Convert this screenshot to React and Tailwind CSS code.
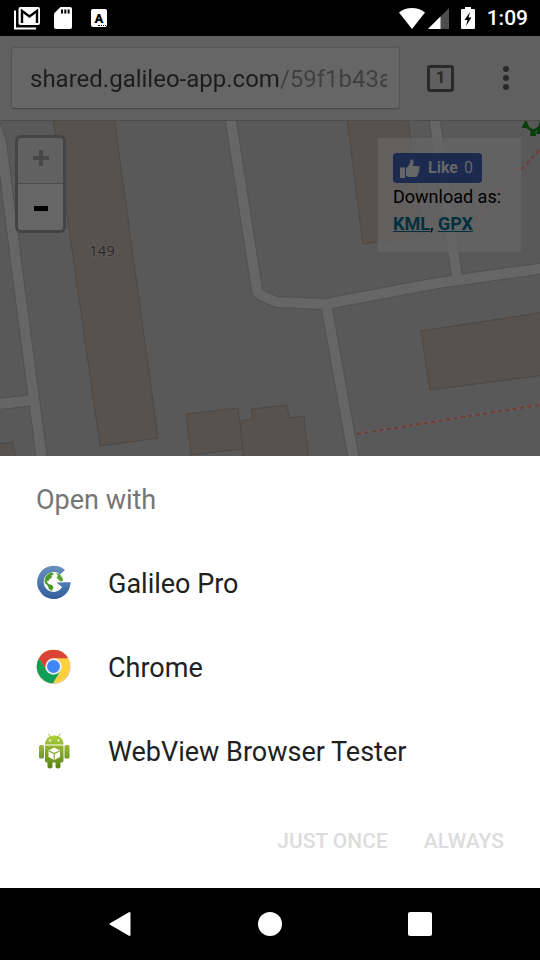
import React from "react";

function GmailIcon() {
  return (
    <svg viewBox="0 0 27 24" className="h-6 w-[27px]" fill="none">
      <path d="M1 4.500V22.500H22" stroke="#fff" strokeWidth="2" />
      <rect x="4.500" y="1" width="21.500" height="18" rx="2" fill="#fff" />
      <path d="M8 17V4.800L15.500 10.500L23 4.800V17" stroke="#000" strokeWidth="2.400" />
    </svg>
  );
}

function SdCardIcon() {
  return (
    <svg viewBox="0 0 18 22" className="h-[22px] w-[18px]">
      <path d="M6.500 0H16a2 2 0 0 1 2 2v18a2 2 0 0 1-2 2H2a2 2 0 0 1-2-2V6.500Z" fill="#fff" />
      <path d="M7 2.500h2v4H7zM10.300 2.500h2v4h-2zM13.600 2.500h2v4h-2z" fill="#000" />
    </svg>
  );
}

function KeyboardIcon() {
  return (
    <span className="relative flex h-[18px] w-4 items-center justify-center rounded-xs bg-white text-[13px] leading-none font-black text-black">
      A
      <span className="absolute right-px bottom-px w-2 border-b border-dotted border-black" />
    </span>
  );
}

function StatusBar() {
  return (
    <header className="flex h-9 items-center justify-between bg-black pr-3 pl-3.5 text-white">
      <div className="flex items-center">
        <GmailIcon />
        <span className="ml-[13px] flex"><SdCardIcon /></span>
        <span className="ml-[19px] flex"><KeyboardIcon /></span>
      </div>
      <div className="flex items-center">
        <svg viewBox="0 0 26 21" className="h-[21px] w-[26px]">
          <path d="M0 4.500C7.500-1.400 18.500-1.400 26 4.500L13 21Z" fill="#fff" />
        </svg>
        <svg viewBox="0 0 21 21" className="ml-[3px] h-[21px] w-[21px]">
          <path d="M21 0V21H0Z" fill="#4d4d4d" />
          <path d="M12.500 8.500V21H0Z" fill="#fff" />
        </svg>
        <svg viewBox="0 0 14 22" className="ml-3 h-[22px] w-3.5">
          <path d="M4 0h6v2h3a1 1 0 0 1 1 1v18a1 1 0 0 1-1 1H1a1 1 0 0 1-1-1V3a1 1 0 0 1 1-1h3Z" fill="#fff" />
          <path d="M9 5L3.500 13H6.500L5 19L10.500 10.500H7.500Z" fill="#000" />
        </svg>
        <time className="ml-3 text-[21px] leading-6 font-medium">1:09</time>
      </div>
    </header>
  );
}

function BrowserBar() {
  return (
    <div className="flex h-[85px] items-center border-b border-[#4c4c4c] bg-[#606060] pl-3">
      <div className="flex h-[60px] min-w-0 flex-1 items-center rounded-xs bg-[#666666] pr-3 pl-[18px] shadow-[0_1px_1px_0_#484848,0_0_1px_1px_#565656]">
        <input
          aria-label="Address"
          readOnly
          value="shared.galileo-app.com/59f1b43a7c"
          className="mt-0.5 h-10 w-full min-w-0 bg-[linear-gradient(to_right,#1c1c1c_249px,#3f3f3f_249px)] bg-clip-text text-2xl text-transparent outline-none"
        />
      </div>
      <button
        aria-label="Open tabs"
        className="ml-7 flex h-[27px] w-[27px] shrink-0 items-center justify-center rounded-[3px] border-[3px] border-[#292929] text-base font-bold text-[#292929]"
      >
        1
      </button>
      <button aria-label="Menu" className="mr-6 ml-[42px] flex h-12 w-5 shrink-0 items-center justify-center">
        <svg viewBox="0 0 6 24" className="h-6 w-1.5" fill="#292929">
          <circle cx="3" cy="3" r="3" />
          <circle cx="3" cy="12" r="3" />
          <circle cx="3" cy="21" r="3" />
        </svg>
      </button>
    </div>
  );
}

function MapDrawing() {
  const roads = [
    "M0 404L32 400",
    "M-6 122L1 142L19 285L42 460",
    "M434 115L457 277",
    "M326 304L354 460",
    "M230 115L257 290Q258 293 261 295L276 302L326 304L400 290Q440 282 480 277L545 268",
  ];
  return (
    <svg
      viewBox="0 121 540 335"
      preserveAspectRatio="xMinYMin slice"
      className="absolute inset-0 h-full w-full"
      fill="none"
      aria-hidden="true"
    >
      <rect y="100" width="540" height="400" fill="#595959" />
      <g fill="#57524e" stroke="#4e4843" strokeWidth="1">
        <path d="M52 110L100 446L158 438L113 110Z" />
        <path d="M346 110L363 244L423 236L407 110Z" />
        <path d="M421 331L545 312V375L430 390Z" />
        <path d="M240 421L253 419L251 409L287 405L289 418L304 416L309 462H244Z" />
        <path d="M186 414L238 408L243 449L191 455Z" />
        <path d="M-5 444.500L13 442L16 460H-5Z" />
      </g>
      <g strokeLinejoin="round">
        {roads.map((d) => <path key={d} d={d} stroke="#515151" strokeWidth="12" />)}
        {roads.map((d) => <path key={d} d={d} stroke="#666666" strokeWidth="10" />)}
      </g>
      <path d="M357 434L545 404" stroke="#5e5e5e" strokeWidth="3" />
      <g stroke="#753a35" strokeWidth="2" strokeDasharray="4.500 3 4 3.500">
        <path d="M357 434L545 404" />
        <path d="M475 219L545 144" />
      </g>
      <g fill="#063f0b">
        <path d="M526 119l3.500 9h-8zM531 129h4l1 7h-6zM540 120l3 14h-7z" />
        <path d="M525 126L533 131L540 127" stroke="#063f0b" strokeWidth="2.500" fill="none" />
      </g>
      <text
        x="102"
        y="256"
        textAnchor="middle"
        className="font-['Noto_Sans',sans-serif] text-[15px]"
        fill="#2c2c2c"
        stroke="#5f5b58"
        strokeWidth="2"
        paintOrder="stroke"
      >
        149
      </text>
    </svg>
  );
}

function ZoomControl() {
  return (
    <div className="relative flex w-[51px] flex-col overflow-hidden rounded-md border-[3px] border-[#444444]">
      <button aria-label="Zoom in" className="flex h-[46px] items-center justify-center border-b border-[#4c4c4c] bg-[#616161] pb-1.5">
        <svg viewBox="0 0 16 16" className="h-4 w-4">
          <path d="M8 0V16M0 8H16" stroke="#484848" strokeWidth="4" />
        </svg>
      </button>
      <button aria-label="Zoom out" className="flex h-[46px] items-center justify-center bg-[#666666]">
        <span className="mt-0.5 h-[5px] w-3.5 bg-black" />
      </button>
    </div>
  );
}

function SharePanel() {
  return (
    <aside className="relative mt-[3px] w-[143px] bg-[#666666]/75 p-[15px] text-black">
      <button className="flex h-[30px] w-[89px] items-center rounded-sm bg-[#1b2a4e] pl-[7px] text-base text-[#666666]">
        <svg viewBox="0 0 20 19" className="mr-2 h-[19px] w-5 shrink-0" fill="#666666">
          <path d="M0 8.500h5V19H0Z" />
          <path d="M6 9C9 7 10 4.500 10.500 1.500C10.800-.5 13.500 0 13.500 3C13.500 4.500 13 6 12.700 7H18c2 0 2.300 2.300.8 3c1 .8.7 2.300-.4 2.700c.8.900.3 2.200-.7 2.500c.5 1.300-.2 2.800-2 2.800H10C8.500 18 7.500 17.300 6 17Z" />
        </svg>
        <span className="font-bold">Like</span>
        <span className="ml-1.5">0</span>
      </button>
      <p className="text-lg leading-[27px] whitespace-nowrap">
        Download as:
        <br />
        <a href="#kml" className="font-bold text-[#00303f] underline">KML</a>,{" "}
        <a href="#gpx" className="font-bold text-[#00303f] underline">GPX</a>
      </p>
    </aside>
  );
}

function GalileoIcon() {
  return (
    <svg viewBox="0 0 36 36" className="h-9 w-9">
      <defs>
        <linearGradient id="galileo-ring" gradientUnits="userSpaceOnUse" x1="0" y1="1" x2="0" y2="34">
          <stop offset="0" stopColor="#6890bd" />
          <stop offset="1" stopColor="#335f9f" />
        </linearGradient>
      </defs>
      <path
        d="M29 5A16.700 16.700 0 1 0 34.500 17.500H20.500L26 22A9.800 9.800 0 1 1 24 9.500Z"
        fill="url(#galileo-ring)"
      />
      <circle cx="17.500" cy="17" r="9.800" fill="#fafcf8" />
      <path d="M9 13Q11 8.500 16 7.500L18 9L15.500 10.500L16 12.500L13.500 14L12.500 16L10.500 16.500L12.500 19L16 20L17.500 22.500L15.500 26L13 24L11.500 20.500L8.500 17.500Z" fill="#4c9929" />
      <path d="M20 8L24 9.500L26.500 13L27 16L24.500 16.500L22 14L20.500 12.500L22 11Z" fill="#57a32d" />
      <path d="M34.500 17.500H20.500L26 22H33.600Z" fill="#4e79b0" />
    </svg>
  );
}

function ChromeIcon() {
  return (
    <svg viewBox="0 0 36 36" className="h-9 w-9">
      <circle cx="17.500" cy="18" r="17" fill="#c9c9c9" />
      <g transform="translate(-0.500 -0.500)">
        <circle cx="18" cy="18" r="16.800" fill="#fdd043" />
        <path d="M3.400 9.700A16.800 16.800 0 0 1 32.600 9.700H18L11 22Z" fill="#da4437" />
        <path d="M3.400 9.700A16.800 16.800 0 0 0 17.500 34.800L25 22H11Z" fill="#109d58" />
        <circle cx="18" cy="18" r="8.200" fill="#f1f1f1" />
        <circle cx="18" cy="18" r="6.500" fill="#4285f4" />
      </g>
    </svg>
  );
}

function AndroidIcon() {
  return (
    <svg viewBox="0 0 36 36" className="h-9 w-9">
      <defs>
        <linearGradient id="android-body" gradientUnits="userSpaceOnUse" x1="0" y1="2" x2="0" y2="35">
          <stop offset="0" stopColor="#b0d23f" />
          <stop offset="1" stopColor="#5b8218" />
        </linearGradient>
      </defs>
      <path d="M12.500 0.800L15 4.500M24 0.800L21.500 4.500" stroke="#a3c24f" strokeWidth="1" strokeLinecap="round" />
      <g fill="url(#android-body)">
        <path d="M9 11.500Q9.500 2.500 18.250 2.500T27.500 11.500Z" />
        <path d="M9 12.500H27.500V27.500a2 2 0 0 1-2 2H11a2 2 0 0 1-2-2Z" />
        <rect x="3" y="12" width="5" height="13.500" rx="1.500" />
        <rect x="28.500" y="12" width="5" height="13.500" rx="1.500" />
        <path d="M11.500 28H16.500V33a2.500 2.500 0 0 1-5 0ZM19.500 28H24.500V33a2.500 2.500 0 0 1-5 0Z" />
      </g>
      <circle cx="14" cy="7.500" r="1" fill="#fff" />
      <circle cx="22.500" cy="7.500" r="1" fill="#fff" />
      <path d="M18.250 14.500L24 17.500V24L18.250 27L12.500 24V17.500Z" fill="#fff" />
      <path d="M13 18L18.250 20.500L23.500 18M18.250 20.500V26.500" stroke="#7fa52c" strokeWidth="1.200" fill="none" />
    </svg>
  );
}

const apps = [
  { name: "Galileo Pro", Icon: GalileoIcon },
  { name: "Chrome", Icon: ChromeIcon },
  { name: "WebView Browser Tester", Icon: AndroidIcon },
];

function OpenWithSheet() {
  return (
    <section aria-labelledby="open-with" className="bg-white pt-[23px] pb-[21px]">
      <h1 id="open-with" className="px-9 text-[27px] leading-[42px] text-[#757575]">Open with</h1>
      <ul className="mt-5">
        {apps.map(({ name, Icon }) => (
          <li key={name}>
            <button className="flex h-21 w-full items-start gap-9 px-9 pt-6 text-left text-[27px] leading-9 text-[#212121]">
              <Icon />
              <span className="pt-px">{name}</span>
            </button>
          </li>
        ))}
      </ul>
      <div className="mt-[23px] flex h-[51px] items-center justify-end gap-9 px-9 text-[21px] font-medium text-[#dcdcdc]">
        <button disabled>JUST ONCE</button>
        <button disabled>ALWAYS</button>
      </div>
    </section>
  );
}

function NavigationBar() {
  return (
    <nav className="flex h-18 items-center justify-center gap-[126px] bg-black">
      <button aria-label="Back">
        <svg viewBox="0 0 24 26" className="h-[26px] w-6">
          <path d="M2.500 13L21.500 2V24Z" fill="#fff" stroke="#fff" strokeWidth="2" strokeLinejoin="round" />
        </svg>
      </button>
      <button aria-label="Home" className="h-6 w-6 rounded-full bg-white" />
      <button aria-label="Recent apps" className="h-6 w-6 rounded-xs bg-white" />
    </nav>
  );
}

export default function App() {
  return (
    <div className="flex min-h-screen flex-col font-[Roboto,sans-serif]">
      <StatusBar />
      <BrowserBar />
      <main className="relative flex flex-1 items-start justify-between overflow-hidden pt-[14px] pr-[19px] pl-[15px]">
        <MapDrawing />
        <ZoomControl />
        <SharePanel />
      </main>
      <OpenWithSheet />
      <NavigationBar />
    </div>
  );
}
